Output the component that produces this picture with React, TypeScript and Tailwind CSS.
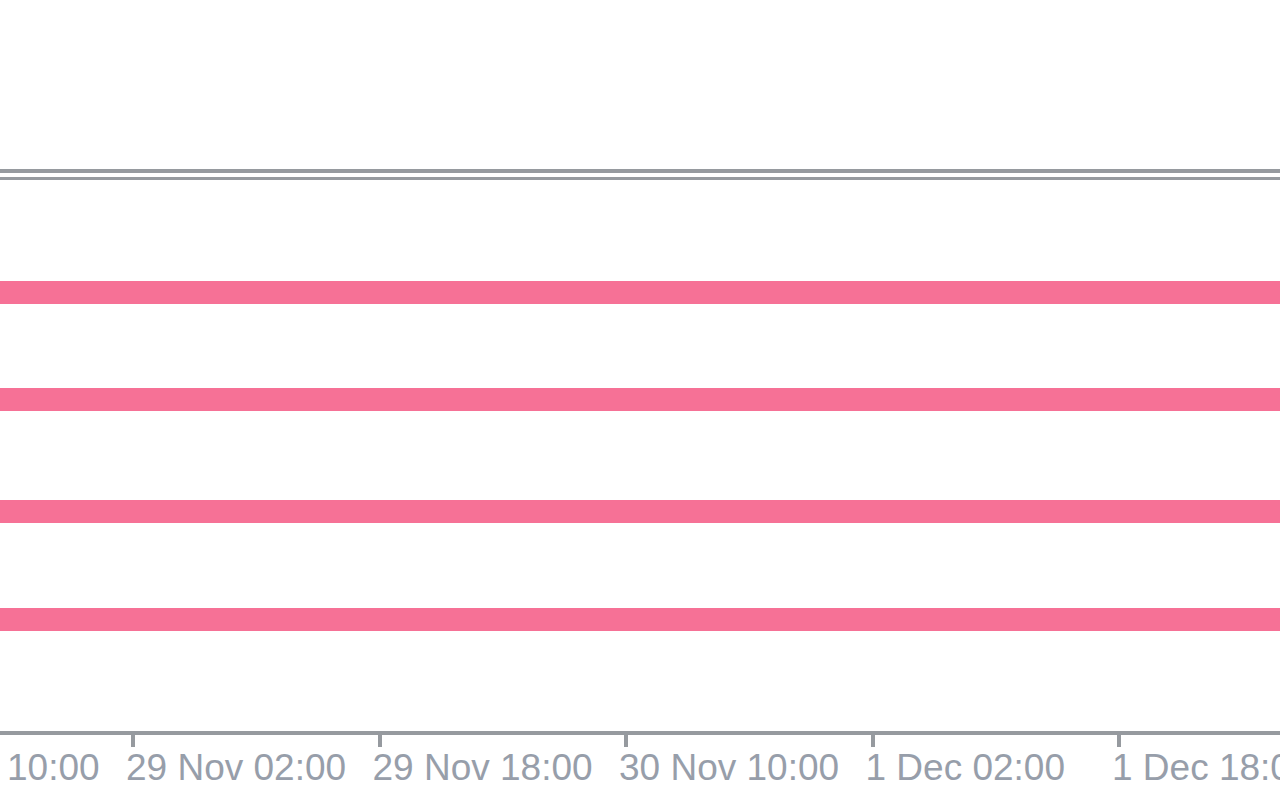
import React from "react";

const LABELS = [
  "28 Nov 10:00",
  "29 Nov 02:00",
  "29 Nov 18:00",
  "30 Nov 10:00",
  "1 Dec 02:00",
  "1 Dec 18:00",
];

const Band: React.FC = () => <div className="h-[23px] w-full bg-[#f67196]" />;

const App: React.FC = () => {
  return (
    <div
      className="flex h-[800px] w-[1280px] flex-col overflow-hidden bg-white"
      style={{ fontFamily: '"Liberation Sans", Arial, sans-serif' }}
    >
      {/* top separator (double line) */}
      <div className="h-[169px] shrink-0" />
      <div className="h-[4px] shrink-0 bg-[#969a9f]" />
      <div className="h-[4px] shrink-0" />
      <div className="h-[3px] shrink-0 bg-[#969a9f]" />

      {/* level lines */}
      <div className="h-[101px] shrink-0" />
      <Band />
      <div className="h-[84px] shrink-0" />
      <Band />
      <div className="h-[89px] shrink-0" />
      <Band />
      <div className="h-[85px] shrink-0" />
      <Band />
      <div className="h-[100px] shrink-0" />

      {/* time axis */}
      <div className="h-[4px] shrink-0 bg-[#969a9f]" />
      <div className="ml-[-115.5px] flex shrink-0">
        {LABELS.map((label) => (
          <div key={label} className="flex w-[246.5px] shrink-0 flex-col">
            <div className="h-[12px] w-[4px] bg-[#969a9f]" />
            <div className="ml-[-5px] mt-[2px] whitespace-nowrap text-[37px] leading-none text-[#979eaa]">
              {label}
            </div>
          </div>
        ))}
      </div>
    </div>
  );
};

export default App;
